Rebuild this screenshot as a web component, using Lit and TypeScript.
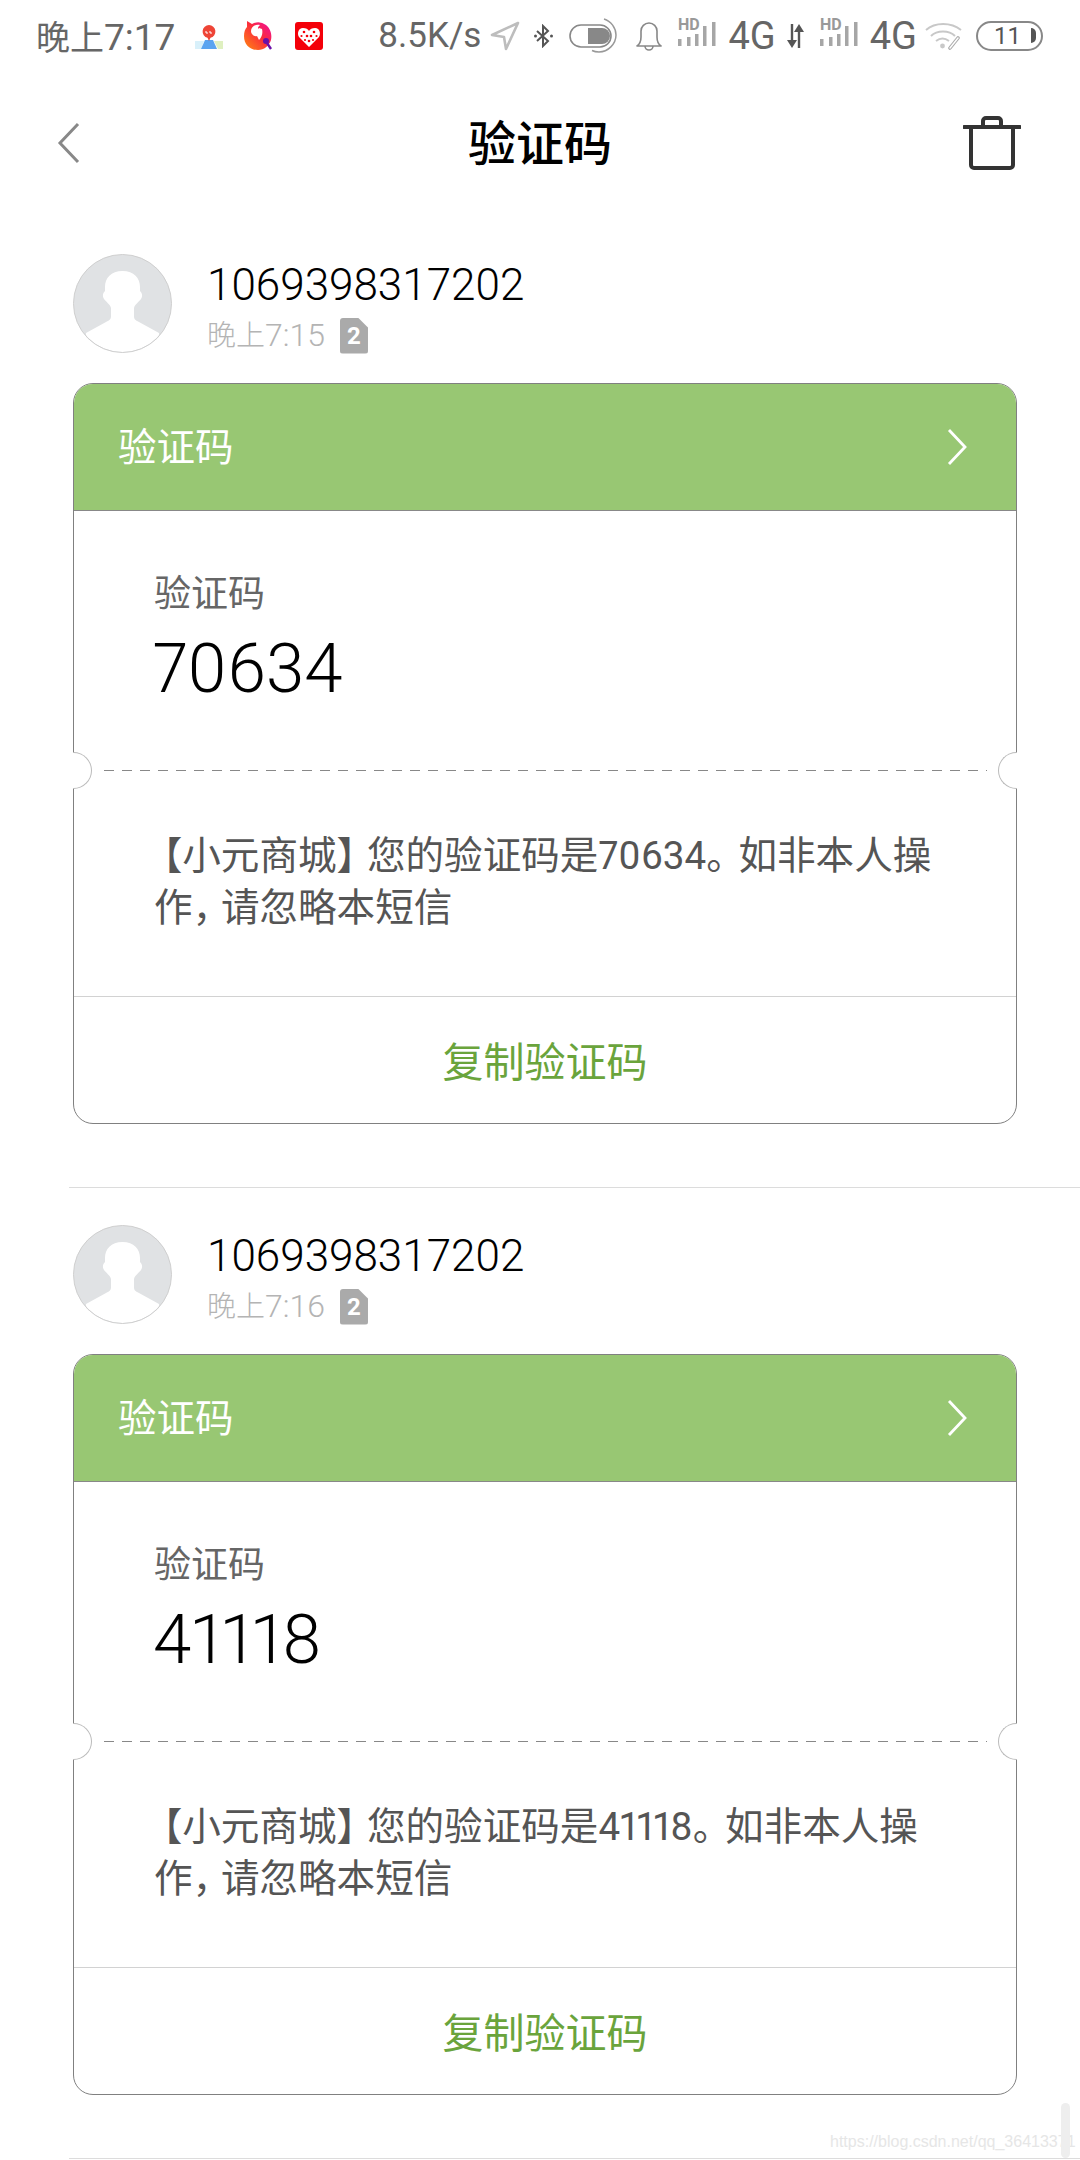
import { LitElement, html, css, svg } from 'lit'
import { customElement } from 'lit/decorators.js'

const baiduIcon = html`<svg class="baidu" width="28" height="24" viewBox="0 0 28 24">
  <path d="M0 16h9l-3 8H0z" fill="#d8f0fa" />
  <path d="M19 16h9v8h-5z" fill="#dff0c0" />
  <path d="M10 15h8l4 9H6z" fill="#5aa4f0" />
  <path d="M14 0a6.500 6.500 0 0 1 1.500 12.800L14 16l-1.500-3.200A6.500 6.500 0 0 1 14 0z" fill="#ee4436" />
  <path d="M11 6v2h2M15 6v2h2" stroke="#fff" stroke-width="1" fill="none" />
</svg>`

const birdIcon = html`<svg class="bird" width="29" height="30" viewBox="0 0 29 30">
  <defs>
    <linearGradient id="bird" x1="0" y1="1" x2="1" y2="0">
      <stop offset="0" stop-color="#ff8a10" />
      <stop offset="0.55" stop-color="#fb2c3c" />
      <stop offset="1" stop-color="#ee0aa8" />
    </linearGradient>
  </defs>
  <path d="M3 0l5 3a13 13 0 0 1 14 1c5 4 6 10 5 15-2 6-7 10-13 10C6 29 0 24 0 15c0-4 1-7 3-9z" fill="url(#bird)" />
  <path d="M16 4c-5-1-9 2-9 6 0 3 3 6 6 5l2 4c3-3 4-7 3-11l-3-1c0 1-1 1-1 0s1-2 2-3z" fill="#fff" />
  <circle cx="22" cy="20" r="3" fill="#6a10a8" />
  <path d="M23 22l4 6" stroke="#6a10a8" stroke-width="2.400" />
</svg>`

const heartIcon = html`<svg class="pdd" width="28" height="28" viewBox="0 0 28 28">
  <rect width="28" height="28" rx="3" fill="#f40009" />
  <path d="M14 25L4 15c-2-3-1-9 4-9 3 0 5 1 6 3 1-2 3-3 6-3 5 0 6 6 4 9z" fill="#fff" />
  <g fill="#f40009">
    <circle cx="9" cy="10" r="1.300" /><circle cx="19" cy="10" r="1.300" />
    <circle cx="6.500" cy="14" r="1.100" /><circle cx="12" cy="14" r="1.300" />
    <circle cx="16" cy="14" r="1.300" /><circle cx="21.500" cy="14" r="1.100" />
    <circle cx="10" cy="18" r="1.100" /><circle cx="14" cy="19" r="1.300" />
    <circle cx="18" cy="18" r="1.100" />
  </g>
</svg>`

const arrowIcon = html`<svg class="locate" width="30" height="30" viewBox="0 0 30 30">
  <path d="M28 2L2 14l12 2 2 12z" fill="none" stroke="#bdbdbd" stroke-width="2.600" stroke-linejoin="round" />
</svg>`

const bluetoothIcon = html`<svg class="bt" width="21" height="24" viewBox="0 0 21 24">
  <path d="M4 7l11 10-5 5V2l5 5L4 17" fill="none" stroke="#555" stroke-width="2" />
  <circle cx="2.500" cy="12" r="1.500" fill="#555" /><circle cx="18.500" cy="12" r="1.500" fill="#555" />
</svg>`

const toggleIcon = html`<svg class="toggle" width="49" height="35" viewBox="0 0 49 35">
  <rect x="1" y="7" width="41" height="22" rx="11" fill="none" stroke="#888" stroke-width="1.600" />
  <path d="M19 10h14a8 8 0 0 1 0 16H19z" fill="#888" />
  <path d="M35 1c7 2 12 9 12 16 0 9-8 17-17 17-3 0-5-.5-7-1.500" fill="none" stroke="#999" stroke-width="1.500" />
</svg>`

const bellIcon = html`<svg class="bell" width="26" height="30" viewBox="0 0 26 30">
  <path d="M1 25c3-2 4-5 4-9V10a8 8 0 0 1 16 0v6c0 4 1 7 4 9z" fill="none" stroke="#888" stroke-width="1.600" stroke-linejoin="round" />
  <path d="M9 25a4 4 0 0 0 8 0" fill="none" stroke="#888" stroke-width="1.600" />
</svg>`

const signalIcon = html`<svg class="signal" width="38" height="33" viewBox="0 -3 38 33">
  <text x="0" y="13" class="hd">HD</text>
  <g fill="#a6a6a6">
    <rect x="0" y="22" width="3.500" height="7" /><rect x="9" y="20" width="3.500" height="9" />
    <rect x="17" y="17" width="3.500" height="12" /><rect x="25" y="9" width="3.500" height="20" />
    <rect x="34" y="5" width="3.500" height="24" />
  </g>
</svg>`

const transferIcon = html`<svg class="transfer" width="17" height="26" viewBox="0 0 17 26">
  <path d="M5 1v17M12 25V9" stroke="#555" stroke-width="2.400" />
  <path d="M0 17h10l-5 8zM7 9l5-8 5 8z" fill="#555" />
</svg>`

const wifiIcon = html`<svg class="wifi" width="37" height="28" viewBox="0 0 37 28">
  <g fill="none" stroke="#c8c8c8" stroke-width="2">
    <path d="M1 8c9-8 25-8 35 0" />
    <path d="M6 14c6-6 18-6 24 0" />
    <path d="M11 19c4-3 9-3 13 0" />
  </g>
  <circle cx="17.500" cy="24" r="2.400" fill="#c8c8c8" />
  <path d="M25 26l8-10" stroke="#aaa" stroke-width="3.600" stroke-linecap="round" />
  <path d="M25 26l8-10" stroke="#fff" stroke-width="1.400" stroke-linecap="round" />
</svg>`

const avatar = svg`<svg class="avatar" width="99" height="99" viewBox="0 0 99 99">
  <defs><clipPath id="disc"><circle cx="49.500" cy="49.500" r="48.500" /></clipPath></defs>
  <circle cx="49.500" cy="49.500" r="49" fill="#e0e2e4" />
  <path clip-path="url(#disc)" fill="#fff" d="M49.500 17C38 17 32 24 32 33v4c-2 2-3 5-1 8 2 3 6 5 7 9v8c0 3-1 4-5 6L13 79v20h73V79l-20-11c-4-2-5-3-5-6v-8c1-4 5-6 7-9 2-3 1-6-1-8v-4c0-9-6-16-17.500-16z" />
  <circle cx="49.500" cy="49.500" r="49" fill="none" stroke="#cfcfcf" stroke-width="1" />
</svg>`

const messages = [
  { time: '7:15', code: '70634' },
  { time: '7:16', code: '41118' },
]

@customElement('app-root')
export class AppRoot extends LitElement {
  static styles = css`
    :host {
      display: block;
      position: relative;
      width: 1080px;
      height: 2160px;
      overflow: hidden;
      background: #fff;
      font-family: Roboto, 'Noto Sans CJK SC', sans-serif;
    }

    .status {
      display: flex;
      align-items: center;
      height: 71px;
      padding-left: 36px;
      color: #666;
      font-size: 37px;
      font-weight: 400;
      white-space: nowrap;
    }
    .status svg { flex: none; }
    .cjk { font-size: 34px; }
    .baidu { margin-left: 20px; margin-top: 2px; }
    .bird { margin-left: 21px; }
    .pdd { margin-left: 22px; }
    .speed { margin-left: 55px; font-size: 35px; }
    .locate { margin-left: 9px; }
    .bt { margin-left: 13px; }
    .toggle { margin-left: 15px; }
    .bell { margin-left: 18px; }
    .signal { margin-left: 16px; margin-bottom: 11px; }
    .net { margin-left: 12px; font-size: 38px; }
    .transfer { margin-left: 11px; }
    .wifi { margin-left: 8px; }
    .hd { font: 700 16px Roboto, sans-serif; fill: #999; }

    .battery {
      box-sizing: border-box;
      display: flex;
      align-items: center;
      justify-content: center;
      position: relative;
      width: 67px;
      height: 30px;
      margin-left: 14px;
      border: 2.500px solid #888;
      border-radius: 15px;
      font-size: 24px;
      color: #555;
      padding-right: 4px;
    }
    .battery::after {
      content: '';
      position: absolute;
      right: 5px;
      top: 5px;
      width: 5px;
      height: 15px;
      border-radius: 0 5px 5px 0;
      background: #555;
    }

    .nav {
      position: relative;
      display: flex;
      align-items: center;
      justify-content: space-between;
      height: 146px;
      padding: 0 59px 2px 57px;
      box-sizing: border-box;
    }
    .nav svg { flex: none; }
    .nav h1 {
      position: absolute;
      left: 0;
      right: 0;
      top: 48px;
      margin: 0;
      text-align: center;
      color: #000;
      font-size: 48px;
      line-height: 52px;
      font-weight: 500;
    }

    .thread {
      margin-left: 69px;
      padding: 37px 63px 63px 4px;
      border-bottom: 1px solid #dcdcdc;
    }

    .sender {
      display: flex;
      gap: 35px;
      align-items: flex-start;
      height: 99px;
      margin-bottom: 30px;
    }
    .avatar { flex: none; }
    .number {
      color: #000;
      font-size: 44px;
      font-weight: 350;
      line-height: 52px;
      margin-top: 5px;
    }
    .meta {
      display: flex;
      align-items: center;
      gap: 15px;
      margin-top: 5px;
      color: #b4b4b4;
      font-size: 29px;
      line-height: 38px;
    }
    .meta .time { font-size: 32px; font-weight: 300; }
    .meta .time span { font-size: 29px; }
    .sim {
      display: flex;
      align-items: center;
      justify-content: center;
      width: 28px;
      height: 36px;
      background: #aaa;
      color: #fff;
      font-size: 24px;
      font-weight: 700;
      border-radius: 3px;
      clip-path: polygon(0 0, 64% 0, 100% 28%, 100% 100%, 0 100%);
    }

    .card {
      position: relative;
      box-sizing: border-box;
      width: 944px;
      border: 1px solid #808080;
      border-radius: 20px;
    }
    .card-head {
      display: flex;
      align-items: center;
      justify-content: space-between;
      box-sizing: border-box;
      height: 127px;
      padding: 0 49px 0 44px;
      background: #98c773;
      border-bottom: 1px solid #888;
      border-radius: 19px 19px 0 0;
      color: #fff;
      font-size: 38.500px;
    }
    .card-head span { margin-bottom: 6px; }
    .code-block {
      padding: 59px 80px 61px 79px;
    }
    .code-label {
      color: #666;
      font-size: 37px;
      line-height: 50px;
      padding-left: 1px;
    }
    .code {
      margin-top: 9px;
      color: #000;
      font-size: 69px;
      font-weight: 350;
      line-height: 80px;
      font-variant-numeric: proportional-nums;
    }
    .tear {
      position: relative;
      height: 1px;
      margin: 0 29px 0 30px;
      background: repeating-linear-gradient(90deg, #888 0 10px, transparent 10px 18px);
    }
    .notch {
      position: absolute;
      top: -18px;
      box-sizing: border-box;
      width: 19px;
      height: 37px;
      background: #fff;
      border: 1px solid #bbb;
    }
    .notch.left {
      left: -31px;
      border-left: 0;
      border-radius: 0 19px 19px 0;
    }
    .notch.right {
      right: -30px;
      border-right: 0;
      border-radius: 19px 0 0 19px;
    }
    .body {
      padding: 59px 65px 62px 80px;
      color: #555;
      font-size: 38.600px;
      line-height: 52px;
      font-variant-numeric: proportional-nums;
    }
    .open {
      font-feature-settings: 'halt';
      margin-left: 9px;
    }
    .close {
      font-feature-settings: 'halt';
      margin-right: 11px;
    }
    .stop {
      font-feature-settings: 'halt';
      margin-right: 13px;
    }
    .comma {
      font-feature-settings: 'halt';
      margin-right: 9px;
    }
    .copy {
      display: flex;
      align-items: center;
      justify-content: center;
      box-sizing: border-box;
      height: 127px;
      padding-bottom: 2px;
      border-top: 1px solid #d2d2d2;
      color: #6aa43c;
      font-size: 41px;
    }

    .watermark {
      position: absolute;
      left: 830px;
      top: 2133px;
      color: #e6e6e6;
      font: 16px 'Liberation Sans', sans-serif;
      white-space: nowrap;
    }
    .scrollbar {
      position: absolute;
      left: 1061px;
      top: 2103px;
      width: 9px;
      height: 55px;
      border-radius: 5px;
      background: #eee;
    }
  `

  private renderThread(m: { time: string; code: string }) {
    return html`
      <section class="thread">
        <div class="sender">
          ${avatar}
          <div>
            <div class="number">1069398317202</div>
            <div class="meta">
              <span class="time"><span>晚上</span>${m.time}</span>
              <span class="sim">2</span>
            </div>
          </div>
        </div>
        <div class="card">
          <div class="card-head">
            <span>验证码</span>
            <svg width="20" height="38" viewBox="0 0 20 38">
              <path d="M2 2l16 17L2 36" fill="none" stroke="#fff" stroke-width="2.800" />
            </svg>
          </div>
          <div class="code-block">
            <div class="code-label">验证码</div>
            <div class="code">${m.code}</div>
          </div>
          <div class="tear">
            <span class="notch left"></span>
            <span class="notch right"></span>
          </div>
          <div class="body">
            <span class="open">【</span>小元商城<span class="close">】</span>您的验证码是${m.code}<span class="stop">。</span>如非本人操作<span class="comma">，</span>请忽略本短信
          </div>
          <div class="copy">复制验证码</div>
        </div>
      </section>
    `
  }

  render() {
    return html`
      <div class="status">
        <span><span class="cjk">晚上</span>7:17</span>
        ${baiduIcon} ${birdIcon} ${heartIcon}
        <span class="speed">8.5K/s</span>
        ${arrowIcon} ${bluetoothIcon} ${toggleIcon} ${bellIcon} ${signalIcon}
        <span class="net">4G</span>
        ${transferIcon} ${signalIcon}
        <span class="net">4G</span>
        ${wifiIcon}
        <span class="battery">11</span>
      </div>
      <div class="nav">
        <svg width="24" height="42" viewBox="0 0 24 42">
          <path d="M21 2L3 21l18 19" fill="none" stroke="#888" stroke-width="3" />
        </svg>
        <h1>验证码</h1>
        <svg width="58" height="56" viewBox="0 0 58 56">
          <path d="M1 12h56M20 11V6a3 3 0 0 1 3-3h12a3 3 0 0 1 3 3v5M8 12v38a3 3 0 0 0 3 3h36a3 3 0 0 0 3-3V12" fill="none" stroke="#333" stroke-width="4" stroke-linecap="round" />
        </svg>
      </div>
      ${messages.map(m => this.renderThread(m))}
      <div class="watermark">https://blog.csdn.net/qq_36413371</div>
      <div class="scrollbar"></div>
    `
  }
}
